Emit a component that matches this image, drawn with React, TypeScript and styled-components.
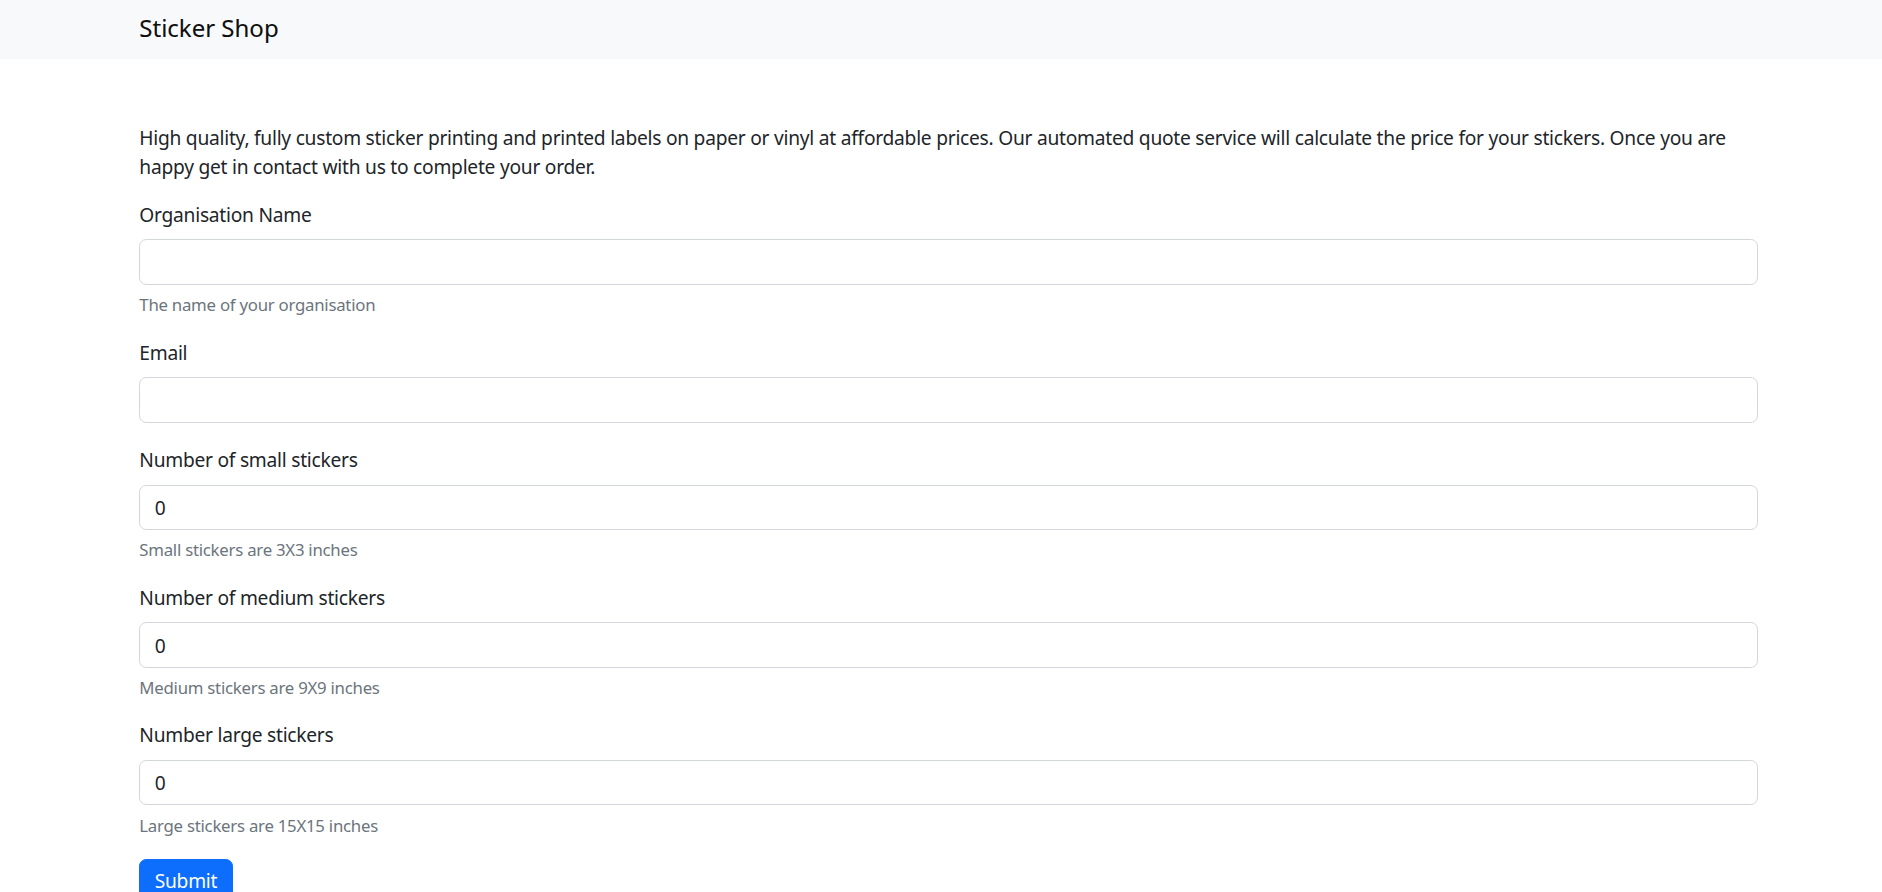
import React, { useState } from "react";
import styled, { createGlobalStyle } from "styled-components";

const GlobalStyle = createGlobalStyle`
  *, *::before, *::after { box-sizing: border-box; }
  html, body { margin: 0; padding: 0; }
  body {
    background: #ffffff;
    color: #212529;
    font-family: "Noto Sans", "Open Sans", "DejaVu Sans", sans-serif;
    font-size: 19.2px;
    line-height: 28.8px;
    letter-spacing: -0.25px;
  }
`;

const Navbar = styled.nav`
  height: 58.8px;
  background: #f8f9fa;
  display: flex;
  align-items: center;
`;

const NavInner = styled.div`
  width: 1618.7px;
  margin-left: 139.3px;
`;

const Brand = styled.a`
  display: inline-block;
  font-size: 24px;
  line-height: 36px;
  letter-spacing: 0;
  color: rgba(0, 0, 0, 0.95);
  text-decoration: none;
  margin-top: -3px;
  -webkit-text-stroke: 0.2px rgba(0, 0, 0, 0.6);
`;

const Main = styled.main`
  width: 1618.7px;
  margin-left: 139.3px;
  padding-top: 65.5px;
`;

const Intro = styled.p`
  margin: 0 0 19.2px;
  line-height: 28.8px;
`;

const Form = styled.form`
  display: flex;
  flex-direction: column;
`;

const Group = styled.div`
  display: flex;
  flex-direction: column;
  margin-bottom: 23.6px;
`;

const Label = styled.label`
  display: block;
  line-height: 28.8px;
  margin-bottom: 9.6px;
`;

const Input = styled.input`
  display: block;
  width: 100%;
  height: 45.6px;
  padding: 7.2px 14.4px;
  font-family: inherit;
  font-size: 19.2px;
  line-height: 28.8px;
  letter-spacing: inherit;
  color: #212529;
  background: #ffffff;
  border: 1px solid #d3d7dc;
  border-radius: 7.2px;
  outline: none;
  appearance: none;
  -moz-appearance: textfield;
  &::-webkit-outer-spin-button,
  &::-webkit-inner-spin-button {
    -webkit-appearance: none;
    margin: 0;
  }
`;

const Help = styled.div`
  margin-top: 7.2px;
  margin-bottom: -2.4px;
  font-size: 16.8px;
  line-height: 25.2px;
  color: #6c757d;
`;

const SubmitButton = styled.button`
  align-self: flex-start;
  height: 45.6px;
  padding: 7.2px 14.4px;
  font-family: inherit;
  font-size: 19.2px;
  line-height: 28.8px;
  letter-spacing: inherit;
  color: #ffffff;
  background: #0d6efd;
  border: 1px solid #0d6efd;
  border-radius: 7.2px;
  cursor: pointer;
`;

type Field = {
  id: string;
  label: string;
  type: string;
  initial: string;
  help?: string;
};

const fields: Field[] = [
  { id: "org", label: "Organisation Name", type: "text", initial: "", help: "The name of your organisation" },
  { id: "email", label: "Email", type: "email", initial: "" },
  { id: "small", label: "Number of small stickers", type: "number", initial: "0", help: "Small stickers are 3X3 inches" },
  { id: "medium", label: "Number of medium stickers", type: "number", initial: "0", help: "Medium stickers are 9X9 inches" },
  { id: "large", label: "Number large stickers", type: "number", initial: "0", help: "Large stickers are 15X15 inches" },
];

export default function App() {
  const [values, setValues] = useState<Record<string, string>>(
    Object.fromEntries(fields.map((f) => [f.id, f.initial]))
  );

  return (
    <>
      <GlobalStyle />
      <Navbar>
        <NavInner>
          <Brand href="#">Sticker Shop</Brand>
        </NavInner>
      </Navbar>
      <Main>
        <Intro>
          High quality, fully custom sticker printing and printed labels on paper or vinyl at affordable
          prices. Our automated quote service will calculate the price for your stickers. Once you are
          happy get in contact with us to complete your order.
        </Intro>
        <Form onSubmit={(e) => e.preventDefault()}>
          {fields.map((f) => (
            <Group key={f.id}>
              <Label htmlFor={f.id}>{f.label}</Label>
              <Input
                id={f.id}
                type={f.type}
                value={values[f.id]}
                onChange={(e) => setValues({ ...values, [f.id]: e.target.value })}
              />
              {f.help && <Help>{f.help}</Help>}
            </Group>
          ))}
          <div>
            <SubmitButton type="submit">Submit</SubmitButton>
          </div>
        </Form>
      </Main>
    </>
  );
}
